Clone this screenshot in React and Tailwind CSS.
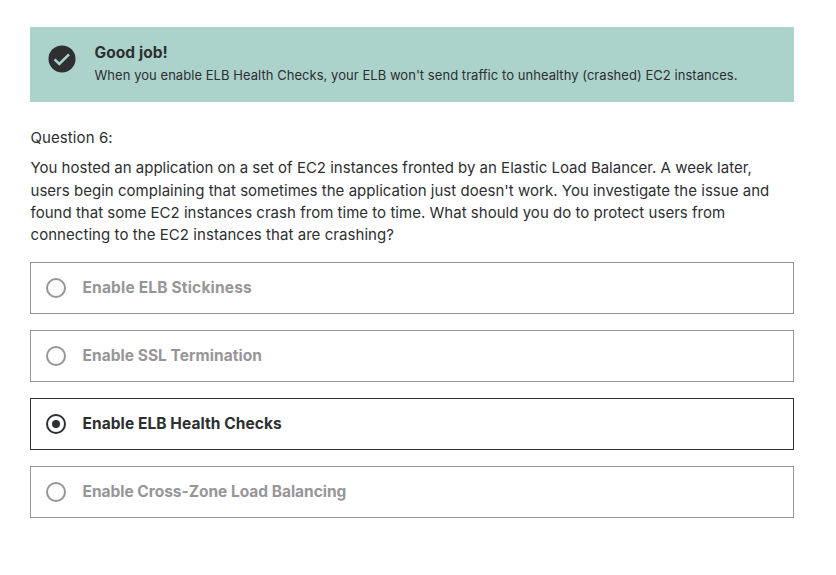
import React from "react";

const options = [
  { label: "Enable ELB Stickiness", tracking: "tracking-[0.18px]" },
  { label: "Enable SSL Termination", tracking: "tracking-[0.04px]" },
  { label: "Enable ELB Health Checks", tracking: "tracking-[0.07px]", selected: true },
  { label: "Enable Cross-Zone Load Balancing", tracking: "tracking-[-0.02px]" },
];

function Radio({ selected }) {
  return (
    <svg viewBox="0 0 20 20" className="h-5 w-5 shrink-0" fill="none">
      <circle cx="10" cy="10" r="9" stroke="currentColor" strokeWidth="2" />
      {selected && <circle cx="10" cy="10" r="4" fill="currentColor" />}
    </svg>
  );
}

function Option({ label, tracking, selected }) {
  return (
    <div
      className={`flex h-[52px] items-center gap-[16.5px] border pl-[15px] ${
        selected ? "border-[#2d2f31] text-[#2d2f31]" : "border-[#969697] text-[#969697]"
      }`}
    >
      <Radio selected={selected} />
      <span className={`whitespace-nowrap text-[15.5px] font-bold leading-[22px] ${tracking}`}>{label}</span>
    </div>
  );
}

export default function App() {
  return (
    <main className="min-h-[575px] bg-white pl-[30px] pr-[42px] pt-[27px] font-['Inter','Liberation_Sans',sans-serif] text-[#2d2f31]">
      <section className="flex h-[75px] bg-[#acd2cc] pl-[18px] pt-[15px]">
        <svg viewBox="0 0 28 28" className="mt-[3px] h-7 w-7 shrink-0" fill="none">
          <circle cx="14" cy="13.9" r="13.5" fill="#2d2f31" />
          <path d="M6.6 14.4l4.7 4.6 9.7-9.6" stroke="#acd2cc" strokeWidth="2.5" />
        </svg>
        <div className="ml-[18.5px] whitespace-nowrap">
          <h2 className="text-[15.5px] font-bold leading-[22px] tracking-[0.06px]">Good job!</h2>
          <p className="text-[13px] leading-[22px] tracking-[0.045px]">
            When you enable ELB Health Checks, your ELB won't send traffic to unhealthy (crashed) EC2 instances.
          </p>
        </div>
      </section>
      <p className="ml-[0.5px] mt-[25px] text-[15px] leading-[22px] tracking-[0.09px]">Question 6:</p>
      <p className="ml-[0.5px] mt-[8.2px] whitespace-nowrap text-[15px] leading-[22.4px]">
        <span className="block">You hosted an application on a set of EC2 instances fronted by an Elastic Load Balancer. A week later,</span>
        <span className="block tracking-[0.028px]">users begin complaining that sometimes the application just doesn't work. You investigate the issue and</span>
        <span className="block tracking-[0.026px]">found that some EC2 instances crash from time to time. What should you do to protect users from</span>
        <span className="block tracking-[0.06px]">connecting to the EC2 instances that are crashing?</span>
      </p>
      <div className="mt-[15.2px] flex flex-col gap-4">
        {options.map((o) => (
          <Option key={o.label} {...o} />
        ))}
      </div>
    </main>
  );
}
